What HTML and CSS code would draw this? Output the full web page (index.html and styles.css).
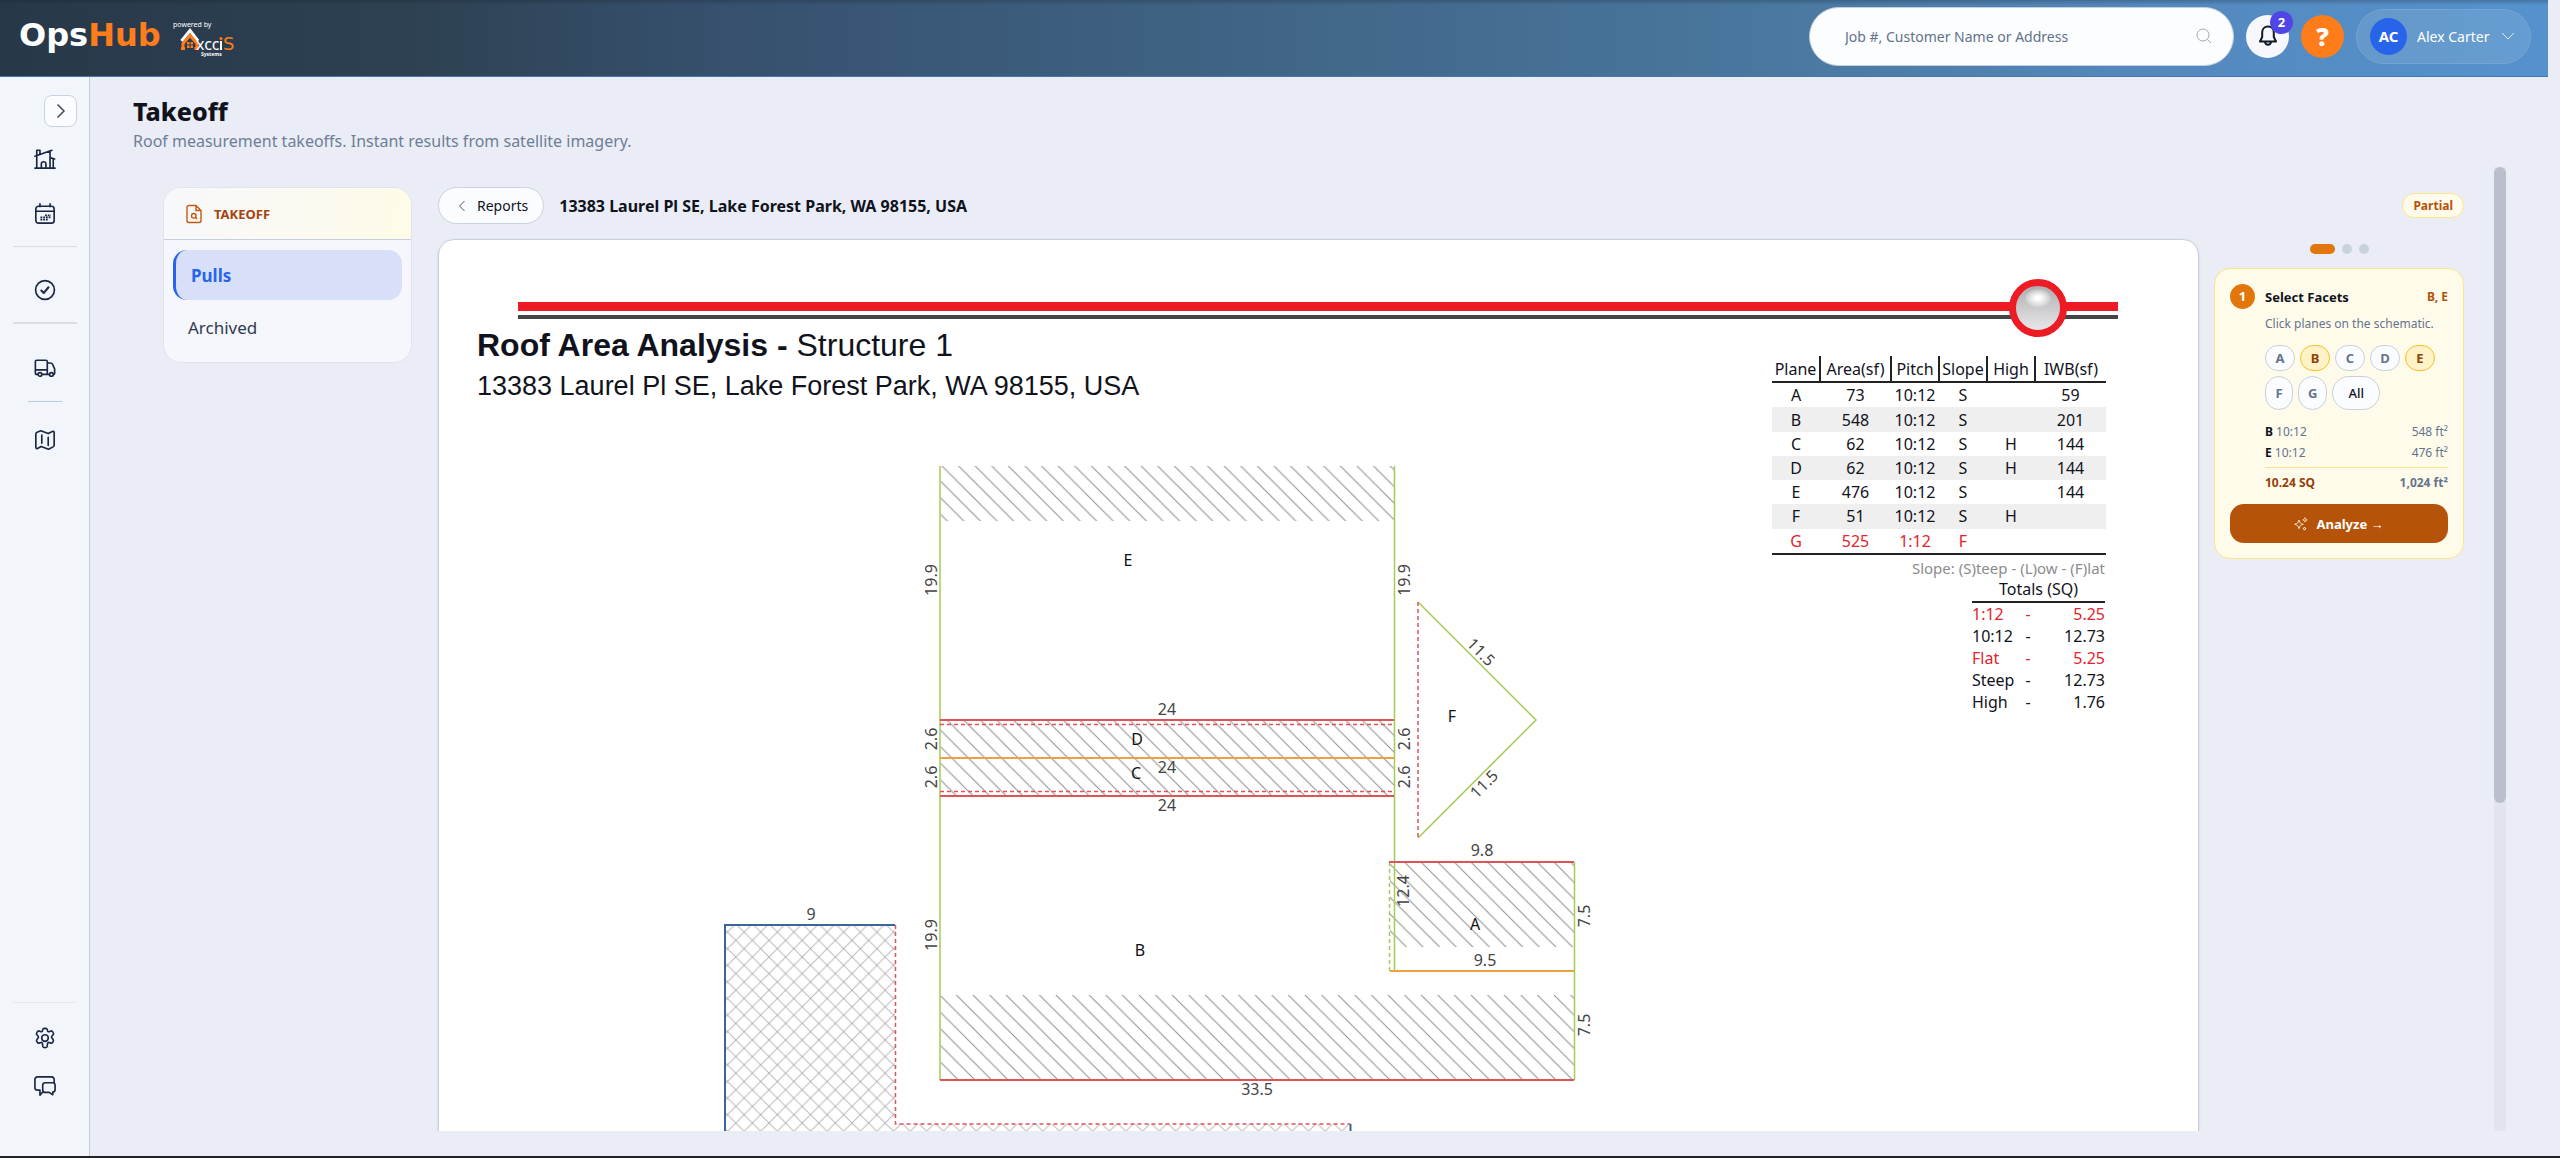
FILE: index.html
```html
<!DOCTYPE html>
<html lang="en">
<head>
<meta charset="utf-8">
<title>Takeoff - OpsHub</title>
<link rel="stylesheet" href="styles.css">
</head>
<body>
<div class="app">
  <header class="topbar">
    <a class="brand" href="#" aria-label="OpsHub home">
      <span class="brand-name">Ops<span class="brand-accent">Hub</span></span>
      <svg class="brand-sub" width="66" height="36" viewBox="0 0 66 36">
        <text x="0" y="7" font-size="7" class="w">powered by</text>
        <path d="M8.500 21 17 10.500 25 21" fill="none" stroke="#fff" stroke-width="3"/>
        <path d="M10 29.500v-6L17 15.500l7 8v6M8 28.500h4M21.500 28.500h3" fill="none" stroke="#ff7c1a" stroke-width="3"/>
        <path d="M14 22h2.500v2.500H14zM17.500 22H20v2.500h-2.500zM14 25.500h2.500V28H14zM17.500 25.500H20V28h-2.500z" fill="#ff7c1a"/>
        <text x="23" y="30" font-size="16" class="w">xcc</text>
        <path d="M48 21v9" stroke="#fff" stroke-width="2"/><circle cx="48" cy="18.500" r="1.500" fill="#ff7c1a"/>
        <text x="50" y="30" font-size="18" class="o">S</text>
        <text x="28" y="36" font-size="5" class="w b">Systems</text>
      </svg>
    </a>
    <form class="search">
      <input type="search" aria-label="Search" placeholder="Job #, Customer Name or Address">
      <svg width="16" height="16" viewBox="0 0 16 16"><circle cx="7" cy="7" r="6"/><path d="m11.500 11.500 3.500 3.500"/></svg>
    </form>
    <button class="round bell" aria-label="Notifications">
      <svg width="24" height="24" viewBox="0 0 24 24"><path d="M12 2.500c-3.800 0-5.800 2.800-5.800 6v4.500L4 17.500h16L17.800 13V8.500c0-3.200-2-6-5.800-6zM9 17.800c.3 1.800 1.400 2.900 3 2.900s2.700-1.100 3-2.900"/></svg>
      <span class="count">2</span>
    </button>
    <button class="round help" aria-label="Help">?</button>
    <button class="user">
      <span class="avatar">AC</span><span class="user-name">Alex Carter</span>
      <svg width="14" height="8" viewBox="0 0 14 8"><path d="m1 1 6 6 6-6"/></svg>
    </button>
  </header>

  <div class="body">
    <nav class="sidebar" aria-label="Main">
      <button class="expand" aria-label="Expand menu"><svg width="10" height="16" viewBox="0 0 10 16"><path d="m1.500 1.500 6.500 6.500-6.500 6.500"/></svg></button>
      <a class="nav home" href="#" aria-label="Home"><svg viewBox="0 0 24 24"><path d="M1 22h22M3 22V8M1 9l18.500-6.500M3 7.500V2.500h3.500v4M17.500 3.500V22M17.500 10.500l5 1.500M21 12v10M8 22v-4.500c0-1.600.9-2.500 2.500-2.500S13 15.900 13 17.500V22"/></svg></a>
      <a class="nav calendar" href="#" aria-label="Calendar"><svg viewBox="0 0 24 24"><rect x="2" y="3.500" width="20" height="18.500" rx="3"/><path d="M2 9h20M6.500 1v3M17.500 1v3"/><path class="dots" d="M12 13.500h6.500M7 15.800h11.500M7 18.200h9"/></svg></a>
      <hr class="wide">
      <a class="nav check" href="#" aria-label="Tasks"><svg viewBox="0 0 24 24"><circle cx="12" cy="12" r="10.300"/><path d="m8 12.500 2.700 2.700L15.800 9" stroke-width="2.200"/></svg></a>
      <hr class="wide thick">
      <a class="nav truck" href="#" aria-label="Deliveries"><svg viewBox="0 0 24 24"><path d="M4 19H3c-1 0-1.500-.5-1.500-1.500V5C1.500 4 2 3.500 3 3.500h10c1 0 1.500.5 1.500 1.500v14M9 19h7.500M1.500 14h13M14.500 6.500H18c1 0 1.700.4 2.200 1.400l2.300 5.100V18c0 .7-.3 1-1 1"/><circle cx="6.500" cy="19" r="2"/><circle cx="19" cy="19" r="2"/></svg></a>
      <hr>
      <a class="nav map" href="#" aria-label="Map"><svg viewBox="0 0 24 24"><path d="M2 5.500c0-1 .4-1.600 1.300-2L7.500 2l8 3 4.500-2.200c1.200-.6 2 0 2 1.200v13.500c0 1-.4 1.600-1.200 2l-5 2.500-8-3-4 2.200c-1.200.6-1.800-.1-1.800-1.200zM8.500 6.500v9M15.500 9v9"/></svg></a>
      <div class="nav-bottom">
        <hr class="wide faint">
        <a class="nav gear" href="#" aria-label="Settings"><svg viewBox="0 0 24 24"><circle cx="12" cy="12" r="3.600"/><path d="M9.700 2.500C10 1.700 10.900 1.500 12 1.500s2 .2 2.300 1l.6 1.800c.2.700 1 1.100 1.700.8l1.800-.7c.8-.3 1.500.1 2.200 1.200.8 1.200 1 2.100.3 2.800l-1.300 1.400c-.6.700-.6 1.600 0 2.300l.3.300 1 1.200c.6.700.5 1.600-.3 2.800-.7 1.100-1.400 1.500-2.200 1.200l-1.800-.7c-.7-.3-1.500.1-1.700.8l-.6 3.800c-.3.800-1.200 1-2.300 1s-2-.2-2.300-1l-.6-3.800c-.2-.7-1-1.100-1.700-.8l-1.800.7c-.8.300-1.500-.1-2.200-1.200-.8-1.200-1-2.100-.3-2.800l1.300-1.400c.6-.7.6-1.600 0-2.300L3.100 8.400c-.7-.7-.5-1.600.3-2.800.7-1.100 1.400-1.500 2.200-1.200l1.800.7c.7.300 1.500-.1 1.700-.8z"/></svg></a>
        <a class="nav chat" href="#" aria-label="Messages"><svg viewBox="0 0 24 24"><path d="M22 8.500V5c0-2-1-3-3-3H4C2 2 1 3 1 5v8.500c0 2 1 3 3 3h2.500V22l3-3.500"/><path d="M12 8.500h8c2 0 3 .8 3 2.500v5c0 1.700-.8 2.500-2.500 2.500v3l-4-2.500h-4c-2 0-3-.8-3-2.500v-5c0-1.700.5-3 2.500-3z"/></svg></a>
      </div>
    </nav>

    <main class="main">
      <h1>Takeoff</h1>
      <p class="lead">Roof measurement takeoffs. Instant results from satellite imagery.</p>
      <div class="scroller">
        <div class="content">
          <aside class="menu">
            <h2><svg width="16" height="20" viewBox="0 0 16 20"><path d="M10 1.500H3C1.700 1.500 1 2.200 1 3.500v13c0 1.300.7 2 2 2h10c1.300 0 2-.7 2-2v-10zM10 1.500v5h5"/><circle cx="7.800" cy="11.800" r="2.300"/><path d="m9.500 13.500 1.500 1.500"/></svg>TAKEOFF</h2>
            <ul>
              <li><a class="active" href="#">Pulls</a></li>
              <li><a href="#">Archived</a></li>
            </ul>
          </aside>

          <section class="report">
            <div class="report-bar">
              <button class="back"><svg width="8" height="12" viewBox="0 0 8 12"><path d="M6.500 1 1.500 6l5 5"/></svg>Reports</button>
              <strong class="address">13383 Laurel Pl SE, Lake Forest Park, WA 98155, USA</strong>
              <span class="badge">Partial</span>
            </div>
            <div class="report-grid">
              <article class="sheet">
                <svg class="rule" viewBox="439 240 1759 85">
                  <defs>
                    <linearGradient id="ball" x1="0" y1="0" x2="0" y2="1"><stop offset="0" stop-color="#a9a9ab"/><stop offset=".6" stop-color="#d2d2d4"/><stop offset="1" stop-color="#ececee"/></linearGradient>
                    <radialGradient id="shine"><stop offset=".2" stop-color="#fff"/><stop offset="1" stop-color="#fff" stop-opacity=".15"/></radialGradient>
                  </defs>
                  <rect x="518" y="302" width="1600" height="9" fill="#ed1c24"/>
                  <rect x="518" y="315" width="1600" height="4" fill="#444"/>
                  <circle cx="2038" cy="308" r="25.500" fill="url(#ball)" stroke="#ed1c24" stroke-width="7"/>
                  <ellipse cx="2038" cy="298" rx="13" ry="9" fill="url(#shine)"/>
                </svg>
                <div class="sheet-body">
                  <div class="sheet-main">
                    <h3>Roof Area Analysis - <span>Structure 1</span></h3>
                    <p class="sheet-address">13383 Laurel Pl SE, Lake Forest Park, WA 98155, USA</p>
                    <svg class="plan" viewBox="477 408 1295 1150" role="img" aria-label="Roof plan">
                      <defs>
                        <pattern id="fall" x="475" y="0" width="16.600" height="16.600" patternUnits="userSpaceOnUse"><path d="M-1-1 17.600 17.600M-1 15.600l2 2M15.600-1l2 2"/></pattern>
                        <pattern id="rise" x="482" y="0" width="16.600" height="16.600" patternUnits="userSpaceOnUse"><path d="M-1 17.600 17.600-1M-1 1l2-2M15.600 17.600l2-2"/></pattern>
                      </defs>
                      <g class="hatch">
                        <path d="M941 467h453v55H941zM941 721h453v76H941zM1390 863h184v85h-184zM941 996h633v85H941z" fill="url(#fall)"/>
                        <path class="light" d="M725 926h170v199h455v300H725z" fill="url(#fall)"/>
                        <path class="light" d="M725 926h170v199h455v300H725z" fill="url(#rise)"/>
                      </g>
                      <g class="edges">
                        <path class="green" d="M940 467v614M1394.500 467v505M1418 603l118 118-118 118M1574.500 863v218"/>
                        <path class="green dash" d="M1389.500 863v109"/>
                        <path class="red" d="M940 721h454M940 797h454M1389 863h185M940 1081h634"/>
                        <path class="amber" d="M940 759h454M1390 972h184"/>
                        <path class="red dash" d="M940 725.500h454M940 792.500h454M1418 603v236M895.500 926v199h455"/>
                        <path class="blue" d="M895 926H725v499h625.500V1125"/>
                      </g>
                      <g class="planes">
                        <text x="1128" y="567">E</text><text x="1137" y="746">D</text><text x="1136" y="780">C</text>
                        <text x="1452" y="723">F</text><text x="1475" y="931">A</text><text x="1140" y="957">B</text>
                      </g>
                      <g class="lengths">
                        <text x="1167" y="716">24</text><text x="1167" y="774">24</text><text x="1167" y="812">24</text>
                        <text x="1482" y="857">9.8</text><text x="1485" y="967">9.5</text><text x="1257" y="1096">33.5</text><text x="811" y="921">9</text>
                        <text transform="translate(937 581) rotate(-90)">19.9</text>
                        <text transform="translate(1410 581) rotate(-90)">19.9</text>
                        <text transform="translate(937 936) rotate(-90)">19.9</text>
                        <text transform="translate(937 740) rotate(-90)">2.6</text>
                        <text transform="translate(937 778) rotate(-90)">2.6</text>
                        <text transform="translate(1410 740) rotate(-90)">2.6</text>
                        <text transform="translate(1410 778) rotate(-90)">2.6</text>
                        <text transform="translate(1409 892) rotate(-90)">12.4</text>
                        <text transform="translate(1590 917) rotate(-90)">7.5</text>
                        <text transform="translate(1590 1026) rotate(-90)">7.5</text>
                        <text transform="translate(1477 657) rotate(45)">11.5</text>
                        <text transform="translate(1488 789) rotate(-45)">11.5</text>
                      </g>
                    </svg>
                  </div>
                  <div class="sheet-side">
                    <table class="planes-table">
                      <colgroup><col class="c-mid"><col class="c-wide"><col class="c-mid"><col class="c-mid"><col class="c-mid"><col class="c-wide"></colgroup>
                      <thead><tr><th>Plane</th><th>Area(sf)</th><th>Pitch</th><th>Slope</th><th>High</th><th>IWB(sf)</th></tr></thead>
                      <tbody>
                        <tr><td>A</td><td>73</td><td>10:12</td><td>S</td><td></td><td>59</td></tr>
                        <tr><td>B</td><td>548</td><td>10:12</td><td>S</td><td></td><td>201</td></tr>
                        <tr><td>C</td><td>62</td><td>10:12</td><td>S</td><td>H</td><td>144</td></tr>
                        <tr><td>D</td><td>62</td><td>10:12</td><td>S</td><td>H</td><td>144</td></tr>
                        <tr><td>E</td><td>476</td><td>10:12</td><td>S</td><td></td><td>144</td></tr>
                        <tr><td>F</td><td>51</td><td>10:12</td><td>S</td><td>H</td><td></td></tr>
                        <tr class="flat"><td>G</td><td>525</td><td>1:12</td><td>F</td><td></td><td></td></tr>
                      </tbody>
                    </table>
                    <p class="note">Slope: (S)teep - (L)ow - (F)lat</p>
                    <table class="totals">
                      <caption>Totals (SQ)</caption>
                      <tbody>
                        <tr class="flat"><td>1:12</td><td>-</td><td>5.25</td></tr>
                        <tr><td>10:12</td><td>-</td><td>12.73</td></tr>
                        <tr class="flat"><td>Flat</td><td>-</td><td>5.25</td></tr>
                        <tr><td>Steep</td><td>-</td><td>12.73</td></tr>
                        <tr><td>High</td><td>-</td><td>1.76</td></tr>
                      </tbody>
                    </table>
                  </div>
                </div>
              </article>

              <aside class="steps">
                <div class="dots-row"><i class="on"></i><i></i><i></i></div>
                <section class="card">
                  <header><span class="num">1</span><h3>Select Facets</h3><span class="picked">B, E</span></header>
                  <div class="card-body">
                    <p>Click planes on the schematic.</p>
                    <div class="chips"><button>A</button><button class="on">B</button><button>C</button><button>D</button><button class="on">E</button><button>F</button><button>G</button><button class="all">All</button></div>
                    <dl>
                      <div><dt><b>B</b> 10:12</dt><dd>548 ft²</dd></div>
                      <div><dt><b>E</b> 10:12</dt><dd>476 ft²</dd></div>
                      <div class="sum"><dt>10.24 SQ</dt><dd>1,024 ft²</dd></div>
                    </dl>
                  </div>
                  <button class="analyze"><svg width="14" height="14" viewBox="0 0 14 14"><path d="M5 3c.6 2.700 1.600 3.700 4.300 4.300C6.600 7.900 5.600 8.900 5 11.600 4.400 8.900 3.400 7.900.700 7.300 3.400 6.700 4.400 5.700 5 3zM11 .700c.3 1.400.8 1.900 2.200 2.200-1.400.3-1.900.8-2.200 2.200-.3-1.400-.8-1.900-2.200-2.200C10.200 2.600 10.700 2.100 11 .700zM10.500 10c.2 1 .6 1.400 1.600 1.600-1 .2-1.400.6-1.600 1.600-.2-1-.6-1.400-1.600-1.600 1-.2 1.400-.6 1.600-1.600z"/></svg>Analyze →</button>
                </section>
              </aside>
            </div>
          </section>
        </div>
        <div class="track"><div class="thumb"></div></div>
      </div>
    </main>
  </div>
</div>
</body>
</html>
```
FILE: styles.css
```css
* { box-sizing: border-box; margin: 0; padding: 0; }
body { font-family: "Noto Sans", "Open Sans", sans-serif; font-size: 16px; color: #11131c; background: #eaedf6; }
button, input { font: inherit; color: inherit; border: 0; background: none; }
button { cursor: pointer; }
a { color: inherit; text-decoration: none; }
svg { display: block; flex: none; }
ul { list-style: none; }

.app { display: flex; flex-direction: column; height: 100vh; overflow: hidden; border-bottom: 2px solid #222326; }

/* Top bar */
.topbar { display: flex; align-items: center; height: 77px; margin-right: 12px; padding: 0 17px 4px 19px; flex: none;
  background: linear-gradient(rgba(20, 30, 40, .25), transparent 5px), linear-gradient(90deg, #273849 0%, #2d4152 16%, #36506d 28%, #4a789f 70%, #5488bd 84%, #5592cd 100%);
  border-bottom: 1px solid #4577ab; }
.brand { display: flex; align-items: center; gap: 12px; margin-right: auto; }
.brand-name { font: 700 32px/40px "DejaVu Sans", sans-serif; color: #fff; padding-bottom: 3px; }
.brand-accent { color: #ff7c1a; }
.brand-sub { overflow: visible; margin-top: 4px; font-family: "Noto Sans", sans-serif; }
.brand-sub .w { fill: #fff; }
.brand-sub .o { fill: #ff7c1a; font-family: "DejaVu Sans", sans-serif; }
.brand-sub .b { font-weight: 700; }
.search { display: flex; align-items: center; width: 425px; height: 59px; padding: 0 21px 0 35px; border-radius: 30px; background: #fcfdff; border: 1px solid #c3d0de; }
.search input { flex: 1; outline: 0; font-size: 14px; }
.search input::placeholder { color: #617289; opacity: 1; }
.search svg { fill: none; stroke: #a0aabb; }
.round { display: flex; align-items: center; justify-content: center; width: 43px; height: 43px; border-radius: 50%; position: relative; }
.bell { margin-left: 12px; background: #f6f8fd; }
.bell svg { fill: none; stroke: #11182a; stroke-width: 2; stroke-linejoin: round; }
.count { position: absolute; right: -4px; top: -4px; width: 23px; height: 23px; border-radius: 50%; background: #4f46e5; color: #fff; font-size: 13px; font-weight: 700; line-height: 23px; }
.help { margin-left: 12px; background: #ff7c1a; color: #fff; font-size: 25px; font-weight: 900; }
.user { display: flex; align-items: center; margin-left: 12px; width: 175px; height: 55px; padding: 0 15px 0 13px; border-radius: 28px; border: 1px solid #74a5d4; background: rgba(255, 255, 255, .1); color: #fff; }
.avatar { width: 37px; height: 37px; border-radius: 50%; background: #2864ea; font-size: 15px; font-weight: 700; line-height: 37px; }
.user-name { margin: 0 auto 0 10px; font-size: 14px; }
.user svg { fill: none; stroke: #dce8f5; }

/* Sidebar */
.body { display: flex; flex: 1; min-height: 0; }
.sidebar { display: flex; flex-direction: column; align-items: center; width: 90px; padding: 18px 12px 0 13px; background: #f2f5fa; border-right: 1px solid #c5cfdb; flex: none; }
.expand { display: flex; align-items: center; justify-content: center; align-self: flex-end; width: 33px; height: 32px; border: 1px solid #c9d3df; border-radius: 8px; background: #fbfcff; }
.expand svg { fill: none; stroke: #444b58; stroke-width: 1.5; }
.nav svg { width: 22px; height: 22px; fill: none; stroke: #1a2744; stroke-width: 1.8; stroke-linecap: round; stroke-linejoin: round; }
.nav .dots { stroke-width: 1.9; stroke-dasharray: 2 1; stroke-linecap: butt; }
.sidebar hr { width: 34px; border: 0; border-top: 1px solid #bccad8; }
.sidebar hr.wide { width: 64px; border-color: #d9dde3; }
.sidebar hr.thick { border-top-width: 2px; }
.sidebar hr.faint { border-color: #e6eaef; }
.home { margin-top: 21px; }
.calendar { margin: 33px 0 21px; }
.check { margin: 32px 0 21px; }
.truck { margin: 33px 0 22px; }
.map { margin-top: 27px; }
.nav-bottom { margin-top: auto; padding-bottom: 59px; display: flex; flex-direction: column; align-items: center; }
.gear { margin-top: 24px; }
.chat { margin-top: 26px; }

/* Page */
.main { display: flex; flex-direction: column; flex: 1; min-width: 0; padding: 17px 54px 25px 43px; }
h1 { font-size: 25px; font-weight: 800; line-height: 34px; }
.lead { font-size: 16px; line-height: 26px; color: #6f7d97; }
.scroller { display: flex; flex: 1; min-height: 0; margin-top: 13px; }
.content { display: flex; align-items: flex-start; gap: 26px; flex: 1; min-width: 0; overflow: hidden; padding: 20px 30px 0 30px; }
.track { width: 12px; background: #e1e4ec; flex: none; }
.thumb { height: 66%; border-radius: 6px; background: #babfcb; }

.menu { width: 249px; flex: none; border: 1px solid #dfe3eb; border-radius: 18px; background: #f5f7fd; overflow: hidden; }
.menu h2 { display: flex; align-items: center; gap: 12px; height: 52px; padding: 0 22px; font-size: 13px; font-weight: 700; color: #a5440f; background: linear-gradient(100deg, #f7f8fc, #fffbe8); border-bottom: 1px solid #c5cfdd; }
.menu h2 svg { fill: none; stroke: #c2590f; stroke-width: 1.4; }
.menu ul { display: grid; gap: 2px; padding: 10px 9px; }
.menu a { display: block; height: 50px; padding: 0 15px; border-radius: 14px; font-size: 17px; line-height: 51px; color: #2f3a4c; }
.menu .active { border-left: 3px solid #2864ea; background: #d7e0f8; color: #2864ea; font-weight: 700; }

.report { flex: 1; min-width: 0; }
.report-bar { display: flex; align-items: center; height: 37px; }
.back { display: flex; align-items: center; gap: 11px; height: 37px; padding: 0 15px 0 19px; border: 1px solid #c9d3df; border-radius: 19px; background: #fbfcff; font-size: 14px; }
.back svg { fill: none; stroke: #555; }
.address { margin-left: 15px; font-size: 16px; }
.badge { margin-left: auto; padding: 0 10px; border: 1px solid #fde68a; border-radius: 13px; background: #fffbeb; color: #b45309; font-size: 12px; font-weight: 700; line-height: 23px; }
.report-grid { display: grid; grid-template-columns: 1fr 250px; gap: 15px; margin-top: 15px; align-items: start; }

/* Report sheet */
.sheet { border: 1px solid #c9d0dc; border-radius: 16px; background: #fff; box-shadow: 0 1px 3px rgba(30, 40, 70, .12); overflow: hidden; }
.rule { width: 100%; overflow: visible; }
.sheet-body { display: flex; align-items: flex-start; padding: 0 93px 0 38px; }
.sheet-main { flex: 1; min-width: 0; font-family: "Liberation Sans", Arial, sans-serif; }
.sheet h3 { font-size: 32px; font-weight: 700; line-height: 40px; white-space: nowrap; }
.sheet h3 span { font-weight: 400; }
.sheet-address { font-size: 27px; line-height: 42px; white-space: nowrap; }
.plan { width: 100%; font-family: "Noto Sans", "Open Sans", sans-serif; font-size: 16px; text-anchor: middle; }
.plan pattern path { stroke: #8d8d90; stroke-width: 1; fill: none; }
.plan .light { opacity: .6; }
.edges { fill: none; stroke-width: 2; }
.edges .green { stroke: #a5cb57; stroke-width: 1.5; }
.red { stroke: #e0525a; }
.amber { stroke: #eda23e; }
.blue { stroke: #3c659b; }
.edges .dash { stroke-width: 1.5; stroke-dasharray: 4 3; }
.lengths { fill: #444; }
.planes { fill: #111; }
.sheet-side { width: 333px; flex: none; margin-top: 31px; }
.sheet-side table { border-collapse: collapse; table-layout: fixed; font-size: 16px; line-height: 20px; }
.planes-table { width: 333px; height: 199px; text-align: center; }
.c-mid { width: 48px; }
.c-wide { width: 71px; }
.planes-table th { height: 26px; font-weight: 400; border-right: 2px solid #222; white-space: nowrap; }
.planes-table th:last-child { border-right: 0; }
.planes-table thead, .planes-table tbody { border-bottom: 2px solid #222; }
.planes-table tbody tr:nth-child(even) { background: #efefef; }
.sheet-side .flat { color: #e3242b; }
.note { margin-top: 3px; font-size: 15px; line-height: 21px; text-align: right; color: #8c8c8c; }
.totals { width: 133px; height: 110px; margin-left: auto; }
.totals caption { padding-bottom: 2px; line-height: 20px; border-bottom: 2px solid #222; }
.totals td:nth-child(1) { width: 49px; }
.totals td:nth-child(2) { width: 14px; text-align: center; }
.totals td:nth-child(3) { text-align: right; }

/* Steps */
.dots-row { display: flex; justify-content: center; gap: 7px; padding: 5px 0 14px; }
.dots-row i { width: 10px; height: 10px; border-radius: 5px; background: #c7d2dd; }
.dots-row .on { width: 25px; background: #e2760b; }
.card { padding: 15px; border: 1px solid #fde38a; border-radius: 16px; background: #fffbeb; font-size: 13px; }
.card header { display: flex; align-items: center; gap: 10px; }
.num { width: 25px; height: 25px; border-radius: 50%; background: #e2760b; color: #fff; font-weight: 700; line-height: 25px; text-align: center; }
.card h3 { font-size: 13px; font-weight: 700; }
.picked { margin-left: auto; font-size: 12px; font-weight: 700; color: #b45309; }
.card-body { padding-left: 35px; }
.card-body p { margin-top: 5px; font-size: 12px; line-height: 20px; color: #64748b; white-space: nowrap; }
.chips { display: flex; flex-wrap: wrap; gap: 5px; margin-top: 11px; }
.chips button { min-width: 28px; height: 26px; padding: 0 9px; border: 1px solid #c9d0dc; border-radius: 17px; background: #fbfcff; font-size: 13px; font-weight: 700; color: #64748b; }
.chips button:nth-child(-n+5) { min-width: 30px; }
.chips .on { border-color: #fbbf24; background: #fef3c7; color: #92400e; }
.chips button:nth-child(n+6) { height: 34px; }
.chips .all { padding: 0 15px; font-weight: 500; color: #11131c; }
dl { margin-top: 11px; font-size: 12px; line-height: 21px; color: #64748b; }
dl div { display: flex; justify-content: space-between; }
dl b { color: #11131c; }
.chips .on { color: #92400e; }
.sum { margin-top: 4px; padding-top: 4px; border-top: 1px solid #fde38a; font-weight: 700; }
.sum dt { color: #92400e; }
.analyze { display: flex; align-items: center; justify-content: center; gap: 8px; width: 100%; height: 39px; margin-top: 11px; border-radius: 14px; background: #b45309; color: #fff; font-weight: 700; }
.analyze svg { fill: none; stroke: #ffe9cf; }
```
